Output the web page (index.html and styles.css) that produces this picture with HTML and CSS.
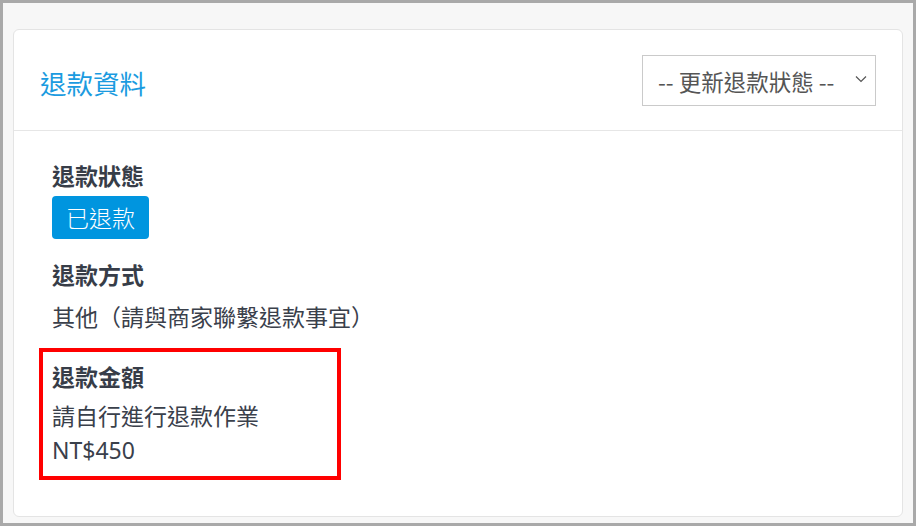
FILE: index.html
```html
<!DOCTYPE html>
<html lang="zh-Hant">
<head>
<meta charset="utf-8">
<title>退款資料</title>
<link rel="stylesheet" href="styles.css">
</head>
<body>
<div class="frame">
  <section class="card">
    <header class="card-header">
      <h2 class="card-title">退款資料</h2>
      <div class="status-select">
        <span class="status-select-text">-- 更新退款狀態 --</span>
        <svg class="chevron" width="12" height="8" viewBox="0 0 12 8" aria-hidden="true">
          <path d="M1 1.5 L6 6.5 L11 1.5" fill="none" stroke="#555" stroke-width="1.2"/>
        </svg>
      </div>
    </header>
    <div class="card-body">
      <div class="field">
        <div class="field-label">退款狀態</div>
        <span class="badge">已退款</span>
      </div>
      <div class="field field-method">
        <div class="field-label">退款方式</div>
        <div class="field-value">其他（請與商家聯繫退款事宜）</div>
      </div>
      <div class="field field-amount">
        <div class="field-label">退款金額</div>
        <div class="field-value">請自行進行退款作業</div>
        <div class="field-value">NT$450</div>
      </div>
    </div>
  </section>
</div>
</body>
</html>
```

FILE: styles.css
```css
* {
  box-sizing: border-box;
}

html, body {
  margin: 0;
  padding: 0;
}

body {
  font-family: "Noto Sans", "Noto Sans CJK TC", sans-serif;
  color: #3a404b;
}

.frame {
  width: 916px;
  height: 526px;
  border: 3px solid #a9a9a9;
  background: #f7f7f7;
  padding: 26px 10px 6px 10px;
  display: flex;
}

.card {
  flex: 1;
  background: #fff;
  border: 1px solid #e4e4e4;
  border-radius: 6px;
  display: flex;
  flex-direction: column;
}

.card-header {
  display: flex;
  align-items: center;
  justify-content: space-between;
  padding: 25px 26px 24px 26px;
  border-bottom: 1px solid #e6e6e6;
}

.card-title {
  margin: 0;
  font-family: "Noto Sans CJK TC", sans-serif;
  font-weight: 400;
  font-size: 26.5px;
  line-height: 34px;
  margin-top: 4px;
  color: #1b9be0;
}

.status-select {
  width: 234px;
  height: 51px;
  border: 1px solid #cacaca;
  display: flex;
  align-items: center;
  justify-content: space-between;
  padding: 0 8px 0 15px;
  color: #555;
  font-family: "Noto Sans CJK TC", sans-serif;
  font-size: 22.5px;
}

.status-select-text {
  line-height: 28px;
}

.chevron {
  margin-top: -4px;
}

.card-body {
  padding: 29px 38px 0 38px;
}

.field-label {
  font-family: "Noto Sans CJK TC", sans-serif;
  font-weight: 700;
  font-size: 23px;
  line-height: 30px;
  color: #373d48;
}

.field-value {
  font-family: "Noto Sans", "Noto Sans CJK TC", sans-serif;
  font-size: 23px;
  line-height: 34px;
  color: #3a404b;
}

.badge {
  display: inline-block;
  margin-top: 6px;
  height: 43px;
  padding: 0 14px;
  border-radius: 4px;
  background: #0095df;
  color: #fff;
  font-family: "Noto Sans CJK TC", sans-serif;
  font-weight: 300;
  font-size: 23px;
  line-height: 43px;
}

.field-method {
  margin-top: 20px;
}

.field-method .field-value {
  margin-top: 11px;
}

.field-amount {
  width: 276px;
  margin-top: 27px;
  outline: 4px solid #ff0000;
  outline-offset: 9px;
}

.field-amount .field-label {
  margin-bottom: 8px;
}
```
